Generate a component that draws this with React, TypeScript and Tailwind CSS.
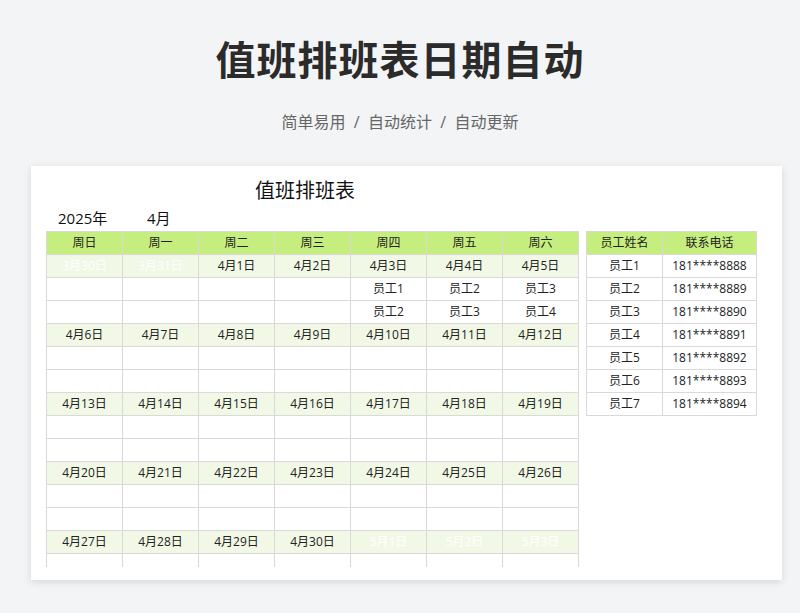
import React from "react";

const weeks: { d: string; out?: boolean }[][] = [
  [{ d: "3月30日", out: true }, { d: "3月31日", out: true }, { d: "4月1日" }, { d: "4月2日" }, { d: "4月3日" }, { d: "4月4日" }, { d: "4月5日" }],
  [6, 7, 8, 9, 10, 11, 12].map((n) => ({ d: `4月${n}日` })),
  [13, 14, 15, 16, 17, 18, 19].map((n) => ({ d: `4月${n}日` })),
  [20, 21, 22, 23, 24, 25, 26].map((n) => ({ d: `4月${n}日` })),
  [{ d: "4月27日" }, { d: "4月28日" }, { d: "4月29日" }, { d: "4月30日" }, { d: "5月1日", out: true }, { d: "5月2日", out: true }, { d: "5月3日", out: true }],
];
const staff: string[][][] = [
  [["", "", "", "", "员工1", "员工2", "员工3"], ["", "", "", "", "员工2", "员工3", "员工4"]],
];
const days = ["周日", "周一", "周二", "周三", "周四", "周五", "周六"];
const cell = "w-[76px] h-[23px] flex items-center justify-center border-r border-b border-[#d9d9d9] text-[12px]";

export default function App() {
  return (
    <div className="w-[800px] h-[613px] bg-[#f3f4f6] overflow-hidden" style={{ fontFamily: '"Open Sans","Noto Sans CJK SC",sans-serif' }}>
      <div className="h-[158px] flex flex-col items-center">
        <h1 className="mt-[30px] text-[40px] leading-[60px] font-bold text-[#2b2b2b] tracking-[1px]">值班排班表日期自动</h1>
        <div className="mt-[20px] text-[16px] text-[#666] leading-[24px]">简单易用 &nbsp;/&nbsp; 自动统计 &nbsp;/&nbsp; 自动更新</div>
      </div>
      <div className="ml-[31px] mt-[8px] w-[751px] h-[414px] bg-white shadow-[0_2px_8px_rgba(0,0,0,0.12)] relative">
        <div className="absolute left-[224px] top-[10px] text-[20px] text-[#111] leading-[30px]">值班排班表</div>
        <div className="absolute left-[27px] top-[41px] text-[15px] text-[#111] leading-[22px]">2025年</div>
        <div className="absolute left-[116px] top-[41px] text-[15px] text-[#111] leading-[22px]">4月</div>
        <div className="absolute left-[15px] top-[65px] flex gap-[7px] items-start">
          <div className="h-[336px] overflow-hidden border-l border-t border-[#d9d9d9] text-[#222]">
            <div className="flex bg-[#c6ee7f]">{days.map((d) => <div key={d} className={cell}>{d}</div>)}</div>
            {weeks.map((w, i) => (
              <div key={i}>
                <div className="flex bg-[#f1f9e6]">
                  {w.map((c, j) => <div key={j} className={`${cell} ${c.out ? "text-white" : ""}`}>{c.d}</div>)}
                </div>
                {[0, 1].map((r) => (
                  <div key={r} className="flex">
                    {days.map((_, j) => <div key={j} className={cell}>{staff[i]?.[r]?.[j] ?? ""}</div>)}
                  </div>
                ))}
              </div>
            ))}
          </div>
          <div className="border-l border-t border-[#d9d9d9] text-[#222]">
            <div className="flex bg-[#c6ee7f]">
              <div className={cell}>员工姓名</div>
              <div className={`${cell} w-[94px]`}>联系电话</div>
            </div>
            {[1, 2, 3, 4, 5, 6, 7].map((n) => (
              <div key={n} className="flex">
                <div className={cell}>员工{n}</div>
                <div className={`${cell} w-[94px]`}>181****{8887 + n}</div>
              </div>
            ))}
          </div>
        </div>
      </div>
    </div>
  );
}
